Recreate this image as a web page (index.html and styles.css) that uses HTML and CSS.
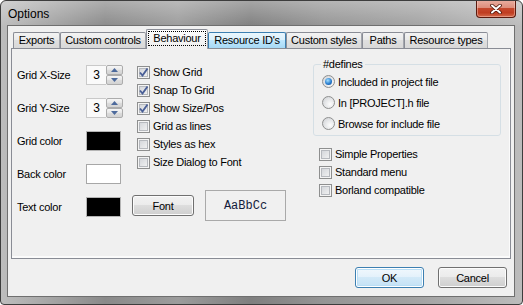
FILE: index.html
```html
<!DOCTYPE html>
<html lang="en">
<head>
    <meta charset="UTF-8">
    <title>Options</title>
    <link rel="stylesheet" href="styles.css">
</head>
<body>
    <div class="window">
        <div class="title-bar">
            <span class="title">Options</span>
            <span class="close-button">
                <svg width="12" height="10" viewBox="0 0 12 10">
                    <path d="M2 1.5 L10 8.5 M10 1.5 L2 8.5" stroke="#4a1409" stroke-width="3.6" stroke-linecap="round"/>
                    <path d="M2 1.5 L10 8.5 M10 1.5 L2 8.5" stroke="#fff" stroke-width="2" stroke-linecap="round"/>
                </svg>
            </span>
        </div>

        <div class="client">
            <div class="tab-strip">
                <div class="tab tab-exports">Exports</div>
                <div class="tab tab-controls">Custom controls</div>
                <div class="tab tab-selected tab-behaviour"><span class="focus-rect">Behaviour</span></div>
                <div class="tab tab-hot tab-ids">Resource ID's</div>
                <div class="tab tab-styles">Custom styles</div>
                <div class="tab tab-paths">Paths</div>
                <div class="tab tab-types">Resource types</div>
            </div>

            <div class="tab-panel">
                <!-- labels and value controls -->
                <div class="field-column">
                    <div class="field-row">
                        <span class="field-label">Grid X-Size</span>
                        <div class="spinner">
                            <span class="spinner-value">3</span>
                            <span class="spinner-buttons">
                                <span class="spin-button"><svg width="7" height="4" viewBox="0 0 7 4"><path d="M0 4 L3.5 0 L7 4 Z" fill="#4d6a9c"/></svg></span>
                                <span class="spin-button"><svg width="7" height="4" viewBox="0 0 7 4"><path d="M0 0 L7 0 L3.5 4 Z" fill="#4d6a9c"/></svg></span>
                            </span>
                        </div>
                    </div>
                    <div class="field-row">
                        <span class="field-label">Grid Y-Size</span>
                        <div class="spinner">
                            <span class="spinner-value">3</span>
                            <span class="spinner-buttons">
                                <span class="spin-button"><svg width="7" height="4" viewBox="0 0 7 4"><path d="M0 4 L3.5 0 L7 4 Z" fill="#4d6a9c"/></svg></span>
                                <span class="spin-button"><svg width="7" height="4" viewBox="0 0 7 4"><path d="M0 0 L7 0 L3.5 4 Z" fill="#4d6a9c"/></svg></span>
                            </span>
                        </div>
                    </div>
                    <div class="field-row">
                        <span class="field-label">Grid color</span>
                        <span class="swatch swatch-black"></span>
                    </div>
                    <div class="field-row">
                        <span class="field-label">Back color</span>
                        <span class="swatch swatch-white"></span>
                    </div>
                    <div class="field-row">
                        <span class="field-label">Text color</span>
                        <span class="swatch swatch-black"></span>
                    </div>
                </div>

                <!-- editor options -->
                <div class="option-column">
                    <div class="check-row"><span class="check-box"><svg width="11" height="11" viewBox="0 0 11 11"><path d="M2 5.5 L4.5 8.5 L9.5 1.5" fill="none" stroke="#4a5f97" stroke-width="1.9"/></svg></span>Show Grid</div>
                    <div class="check-row"><span class="check-box"><svg width="11" height="11" viewBox="0 0 11 11"><path d="M2 5.5 L4.5 8.5 L9.5 1.5" fill="none" stroke="#4a5f97" stroke-width="1.9"/></svg></span>Snap To Grid</div>
                    <div class="check-row"><span class="check-box"><svg width="11" height="11" viewBox="0 0 11 11"><path d="M2 5.5 L4.5 8.5 L9.5 1.5" fill="none" stroke="#4a5f97" stroke-width="1.9"/></svg></span>Show Size/Pos</div>
                    <div class="check-row"><span class="check-box"></span>Grid as lines</div>
                    <div class="check-row"><span class="check-box"></span>Styles as hex</div>
                    <div class="check-row"><span class="check-box"></span>Size Dialog to Font</div>

                    <div class="font-row">
                        <span class="push-button font-button">Font</span>
                        <span class="font-preview">AaBbCc</span>
                    </div>
                </div>

                <div class="side-column">
                    <fieldset class="group-box">
                        <legend>#defines</legend>
                        <div class="radio-row"><span class="radio radio-on"></span>Included in project file</div>
                        <div class="radio-row"><span class="radio"></span>In [PROJECT].h file</div>
                        <div class="radio-row"><span class="radio"></span>Browse for include file</div>
                    </fieldset>
                    <div class="side-checks">
                        <div class="check-row"><span class="check-box"></span>Simple Properties</div>
                        <div class="check-row"><span class="check-box"></span>Standard menu</div>
                        <div class="check-row"><span class="check-box"></span>Borland compatible</div>
                    </div>
                </div>
            </div>

            <div class="dialog-buttons">
                <span class="push-button default-button">OK</span>
                <span class="push-button">Cancel</span>
            </div>
        </div>
    </div>
</body>
</html>
```

FILE: styles.css
```css
/* Options dialog, Windows 7 look */

* {
    box-sizing: border-box;
}

body {
    margin: 0;
    width: 523px;
    height: 305px;
    overflow: hidden;
    background: #fff;
    font-family: "Liberation Sans", Arial, sans-serif;
    font-size: 11px;
    letter-spacing: -0.25px;
    color: #000;
}

/* Window frame */
.window {
    width: 523px;
    height: 305px;
    border: 1px solid #3d3d3d;
    border-radius: 6px 6px 4px 4px;
    overflow: hidden;
    display: flex;
    flex-direction: column;
    background:
        linear-gradient(rgba(255, 255, 255, 0.3), rgba(255, 255, 255, 0) 26px),
        linear-gradient(90deg, #bdbdbd 0%, #a9a9a9 8%, #8a8a8a 20%, #9c9c9c 34%, #7f7f7f 48%, #959595 62%, #a3a3a3 80%, #bcbcbc 100%);
}

.title-bar {
    height: 24px;
    flex-shrink: 0;
    display: flex;
}

.title {
    padding: 6px 0 0 7px;
    font-size: 12px;
    line-height: 14px;
    letter-spacing: 0;
}

.close-button {
    margin: -1px 6px 0 auto;
    width: 40px;
    height: 18px;
    border: 1px solid #5b1a0e;
    border-top: none;
    border-radius: 0 0 4px 4px;
    background: linear-gradient(#eaafa2 0%, #dd8e7c 45%, #c5482d 50%, #bf3d21 75%, #d46a4b 100%);
    box-shadow: inset 0 0 0 1px rgba(255, 210, 200, 0.45);
    display: flex;
    align-items: center;
    justify-content: center;
}

.client {
    margin: 0 7px 7px 6px;
    height: 272px;
    border: 1px solid #6f6f6f;
    background: #f0f0f0;
    display: flex;
    flex-direction: column;
}

/* Tabs */
.tab-strip {
    height: 22px;
    flex-shrink: 0;
    display: flex;
    align-items: flex-end;
    padding-left: 5px;
}

.tab {
    height: 16px;
    border: 1px solid #898c95;
    border-bottom: none;
    border-right-color: #a3a6ad;
    border-radius: 2px 2px 0 0;
    background: linear-gradient(#f3f3f3, #e9e9e9 50%, #dfdfdf 50%, #d8d8d8);
    line-height: 15px;
    text-align: center;
    white-space: nowrap;
}

.tab-exports { width: 47px; }
.tab-controls { width: 86px; }
.tab-behaviour { width: 62px; }
.tab-ids { width: 78px; }
.tab-styles { width: 76px; }
.tab-paths { width: 42px; }
.tab-types { width: 84px; }

.tab-hot {
    border-color: #3c7fb1;
    background: linear-gradient(#eaf6fd, #d9f0fc 50%, #bee6fd 50%, #a7d9f5);
}

.tab-selected {
    position: relative;
    z-index: 1;
    height: 20px;
    margin-bottom: -1px;
    padding-top: 1px;
    background: linear-gradient(#fefefe, #f3f3f3 60%, #f0f0f0);
    display: flex;
    justify-content: center;
    align-items: flex-start;
}

.focus-rect {
    border: 1px dotted #000;
    padding: 0 4px;
    line-height: 13px;
}

.tab-panel {
    margin: 0 3px;
    height: 211px;
    flex-shrink: 0;
    border: 1px solid #898c95;
    box-shadow: inset -1px -2px 0 #fbfbfb;
    display: flex;
    padding: 9px 0 0 5px;
}

/* Left column */
.field-column {
    width: 106px;
    margin-top: 7px;
    display: flex;
    flex-direction: column;
    gap: 13px;
}

.field-row {
    height: 20px;
    display: flex;
    align-items: center;
}

.field-label {
    width: 69px;
    flex-shrink: 0;
}

.spinner {
    display: flex;
    height: 20px;
}

.spinner-value {
    width: 20px;
    border: 1px solid #c9c9c9;
    border-right: none;
    background: #fafafa;
    line-height: 18px;
    text-align: center;
    font-size: 12px;
}

.spinner-buttons {
    width: 17px;
    display: flex;
    flex-direction: column;
}

.spin-button {
    height: 10px;
    border: 1px solid #acacac;
    border-radius: 2px;
    background: linear-gradient(#f6f6f6, #e6e6e6 50%, #dcdcdc 50%, #d3d3d3);
    display: flex;
    align-items: center;
    justify-content: center;
}

.swatch {
    width: 35px;
    height: 20px;
    border: 1px solid #b5b5b5;
}

.swatch-black {
    background: #000;
}

.swatch-white {
    background: #fff;
    border-color: #a7a7a7;
}

/* Middle column */
.option-column {
    width: 181px;
    margin-left: 9px;
    margin-top: 5px;
    display: flex;
    flex-direction: column;
}

.check-row {
    height: 18px;
    display: flex;
    align-items: center;
    gap: 3px;
    padding-left: 5px;
    white-space: nowrap;
}

.check-box {
    width: 13px;
    height: 13px;
    flex-shrink: 0;
    border: 1px solid #8e8f8f;
    background: linear-gradient(135deg, #cdd0d5, #f7f7f7);
    box-shadow: inset 0 0 0 1px #f4f4f4, inset 0 0 0 2px #b6b9be;
    display: flex;
    align-items: center;
    justify-content: center;
}

.font-row {
    display: flex;
    align-items: center;
    gap: 11px;
    margin-top: 19px;
}

.push-button {
    height: 21px;
    border: 1px solid #707070;
    border-radius: 3px;
    background: linear-gradient(#f2f2f2, #ebebeb 50%, #dddddd 50%, #cfcfcf);
    box-shadow: inset 0 0 0 1px #fcfcfc;
    display: flex;
    align-items: center;
    justify-content: center;
}

.font-button {
    width: 62px;
}

.font-preview {
    width: 81px;
    height: 31px;
    border: 1px solid #a9a9a9;
    display: flex;
    align-items: center;
    justify-content: center;
    font-family: "Liberation Mono", "Courier New", monospace;
    font-size: 12px;
    letter-spacing: 0;
    color: #141c3c;
}

/* Right column */
.side-column {
    width: 188px;
}

.group-box {
    margin: 0;
    padding: 0 7px 1px;
    border: 1px solid #d5dfe5;
    border-radius: 3px;
}

.group-box legend {
    padding: 0 2px;
    line-height: 13px;
}

.radio-row {
    height: 21px;
    display: flex;
    align-items: center;
    gap: 3px;
    padding-left: 1px;
    white-space: nowrap;
}

.radio {
    width: 13px;
    height: 13px;
    flex-shrink: 0;
    border: 1px solid #8e8f8f;
    border-radius: 50%;
    background: radial-gradient(circle at 65% 65%, #fdfdfd, #d6d8db 80%);
    display: flex;
    align-items: center;
    justify-content: center;
}

.radio-on::after {
    content: "";
    width: 7px;
    height: 7px;
    border-radius: 50%;
    background: radial-gradient(circle at 40% 35%, #a5e0ff, #2a7fd0 55%, #0d3f86);
}

.side-checks {
    margin-top: 9px;
}

.side-checks .check-row {
    padding-left: 6px;
}

/* Bottom buttons */
.dialog-buttons {
    display: flex;
    justify-content: flex-end;
    gap: 14px;
    margin-top: 8px;
    padding-right: 7px;
}

.dialog-buttons .push-button {
    width: 69px;
}

.default-button {
    border-color: #3c7fb1;
    background: linear-gradient(#f1f8fd, #e3f1fb 50%, #d2e9f8 50%, #c4e1f5);
    box-shadow: inset 0 0 0 1px #fff, inset 0 0 0 2px #b9def6;
}
```
